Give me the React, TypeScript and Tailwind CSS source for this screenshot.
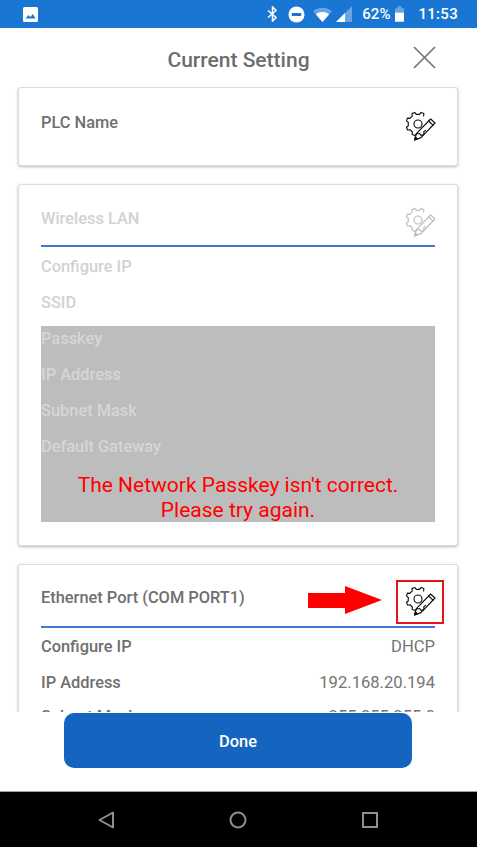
import React from 'react';

const FONT = { fontFamily: 'Roboto, "Liberation Sans", sans-serif' };

// gear outline, left open where the pencil crosses it
const gearPath = () => {
  const cx = 13, cy = 15, outer = 12, inner = 9.8;
  const pts: string[] = [];
  const start = -50, step = 45, count = 6;
  for (let i = 0; i < count; i++) {
    const a = start - i * step;
    const seq: [number, number][] = [
      [a - 5, inner], [a - 11, outer], [a - 25, outer], [a - 31, inner], [a - 45, inner],
    ];
    seq.forEach(([deg, r], j) => {
      const x = cx + r * Math.cos((deg * Math.PI) / 180);
      const y = cy + r * Math.sin((deg * Math.PI) / 180);
      pts.push(`${i === 0 && j === 0 ? 'M' : 'L'}${x.toFixed(2)} ${y.toFixed(2)}`);
    });
  }
  return pts.join(' ');
};

const GearPencil = ({ className }: { className?: string }) => (
  <svg viewBox="0 0 32 32" className={className} fill="none" stroke="currentColor" strokeWidth="1.15" strokeLinejoin="round" strokeLinecap="round">
    <path d={gearPath()} />
    <circle cx="13" cy="15" r="4" />
    <path d="M9.5 31 L11.6 24.4 L25.6 10 L30 14 L16 28.6 Z" />
    <path d="M23.6 12 L28 16.1" />
    <path d="M9.5 31 L10.4 28 L12.5 30 Z" fill="currentColor" />
  </svg>
);

const StatusBar = () => (
  <div className="h-7 shrink-0 bg-[#1976d2] flex items-center pl-[23px] pr-[19px] text-white">
    <svg viewBox="0 0 15 15" className="w-[15px] h-[15px]">
      <rect x="0" y="0" width="15" height="15" rx="1.5" fill="#fff" />
      <path d="M2.5 11.5 L5.5 8 L7.5 10 L9.8 7 L12.5 11.5 Z" fill="#1976d2" />
    </svg>
    <div className="ml-auto flex items-center">
      <svg viewBox="0 0 12 18" className="w-[11px] h-[16px]" fill="none" stroke="#fff" strokeWidth="1.7">
        <path d="M1 5 L10 13 L6 17 V1 L10 5 L1 13" />
      </svg>
      <svg viewBox="0 0 18 18" className="w-[17px] h-[17px] ml-[10px]">
        <circle cx="9" cy="9" r="8.5" fill="#fff" />
        <rect x="4" y="7.4" width="10" height="3.2" fill="#1976d2" />
      </svg>
      <svg viewBox="0 0 20 16" className="w-[19px] h-[15px] ml-[8px]">
        <path d="M0 4.5 C5 -0.5 15 -0.5 20 4.5 L10 16 Z" fill="#fff" fillOpacity="0.35" />
        <path d="M3 8 C7 4.6 13 4.6 17 8 L10 16 Z" fill="#fff" />
      </svg>
      <svg viewBox="0 0 16 16" className="w-[16px] h-[16px] ml-[4px]">
        <path d="M0 16 L16 0 V16 Z" fill="#fff" fillOpacity="0.35" />
        <path d="M0 16 L9 7 V16 Z" fill="#fff" />
      </svg>
      <span className="ml-[10px] text-[15px] leading-none font-medium">62%</span>
      <svg viewBox="0 0 10 17" className="w-[9px] h-[16px] ml-[5px]">
        <path d="M3 0 H7 V2 H10 V17 H0 V2 H3 Z" fill="#fff" fillOpacity="0.35" />
        <path d="M0 7 H10 V17 H0 Z" fill="#fff" />
      </svg>
      <span className="ml-[14px] text-[15px] leading-none font-medium tracking-[0.3px]">11:53</span>
    </div>
  </div>
);

const Label = ({ children, className = 'text-[#6f6f6f]' }: { children: React.ReactNode; className?: string }) => (
  <span className={`text-[16.4px] font-medium ${className}`}>{children}</span>
);

const Row = ({ label, value, className }: { label: string; value?: string; className?: string }) => (
  <div className="h-9 flex items-center justify-between">
    <Label className={className}>{label}</Label>
    {value && <span className="text-[16.6px] text-[#757575]">{value}</span>}
  </div>
);

const cardClass = 'bg-white border border-[#dcdcdc] rounded-[3px] shadow-[0_1px_3px_rgba(0,0,0,0.28)] pl-[22px] pr-[22px]';

export default function App() {
  return (
    <div className="w-[477px] h-[847px] flex flex-col bg-white overflow-hidden" style={FONT}>
      <StatusBar />

      <div className="h-[59px] shrink-0 relative flex items-center justify-center">
        <h1 className="text-[21px] font-medium text-[#6d6d6d] mt-[7px]">Current Setting</h1>
        <button className="absolute left-[413px] top-[18px] text-[#757575]">
          <svg viewBox="0 0 23 23" className="w-[23px] h-[23px]" stroke="currentColor" strokeWidth="1.7">
            <path d="M1 1 L22 22 M22 1 L1 22" />
          </svg>
        </button>
      </div>

      <div className="flex-1 min-h-0 overflow-hidden pl-[18px] pr-[19px] flex flex-col gap-[18px]">
        <div className={`${cardClass} h-[79px] shrink-0 flex justify-between pt-[23px]`}>
          <Label>PLC Name</Label>
          <GearPencil className="w-8 h-8 -mr-[2px] -mt-[2px] text-[#111]" />
        </div>

        <div className={`${cardClass} h-[362px] shrink-0 pt-[17px]`}>
          <div className="h-[45px] border-b-2 border-[#3f78d8] flex justify-between">
            <Label className="text-[#d2d2d2] mt-[5px]">Wireless LAN</Label>
            <GearPencil className="w-8 h-8 -mr-[2px] mt-[3px] text-[#bdbdbd]" />
          </div>
          <div className="mt-[2px]">
            <Row label="Configure IP" className="text-[#d2d2d2]" />
            <Row label="SSID" className="text-[#d2d2d2]" />
            <div className="bg-[#bdbdbd] h-[196px] mt-[5px] overflow-hidden">
              <div className="-mt-[5px]">
                <Row label="Passkey" className="text-[#d6d6d6]" />
                <Row label="IP Address" className="text-[#d6d6d6]" />
                <Row label="Subnet Mask" className="text-[#d6d6d6]" />
                <Row label="Default Gateway" className="text-[#d6d6d6]" />
              </div>
              <p className="mt-[8px] text-center text-[21px] leading-[25px] text-[#ff0000]">
                The Network Passkey isn't correct.
                <br />
                Please try again.
              </p>
            </div>
          </div>
        </div>

        <div className={`${cardClass} shrink-0 pt-[15px] pb-4 relative`}>
          <div className="h-[48px] border-b-2 border-[#3f78d8] flex justify-between">
            <Label className="text-[#6f6f6f] mt-[6px]">Ethernet Port (COM PORT1)</Label>
            <GearPencil className="w-8 h-8 -mr-[2px] mt-[4px] text-[#111]" />
          </div>
          <div className="pt-[1px]">
            <Row label="Configure IP" value="DHCP" />
            <Row label="IP Address" value="192.168.20.194" />
            <div className="-mt-[2px]">
              <Row label="Subnet Mask" value="255.255.255.0" />
            </div>
          </div>
          {/* annotation drawn on top of the screenshot */}
          <svg viewBox="0 0 74 28" className="absolute left-[289px] top-[21px] w-[74px] h-[28px]">
            <path d="M0 7 H37 V0 L74 14 L37 28 V22 H0 Z" fill="#ff0000" />
          </svg>
          <div className="absolute left-[377px] top-[15px] w-[48px] h-[44px] border-2 border-[#e8141c]" />
        </div>
      </div>

      <div className="h-[79px] shrink-0 bg-white pl-[64px] pr-[65px] pt-[1px]">
        <button className="w-full h-[55px] pt-[3px] rounded-[10px] bg-[#1565c0] text-white text-[16.4px] font-medium">Done</button>
      </div>

      <div className="h-[56px] shrink-0 bg-black border-t border-[#9e9e9e] flex items-center pl-[98px] text-[#8f8f8f]">
        <svg viewBox="0 0 17 18" className="w-[17px] h-[18px]" fill="none" stroke="currentColor" strokeWidth="2" strokeLinejoin="round">
          <path d="M15 1.5 V16.5 L1.5 9 Z" />
        </svg>
        <svg viewBox="0 0 18 18" className="w-[18px] h-[18px] ml-[114px]" fill="none" stroke="currentColor" strokeWidth="2">
          <circle cx="9" cy="9" r="7.5" />
        </svg>
        <svg viewBox="0 0 16 16" className="w-[16px] h-[16px] ml-[115px]" fill="none" stroke="currentColor" strokeWidth="2">
          <rect x="1" y="1" width="14" height="14" />
        </svg>
      </div>
    </div>
  );
}
